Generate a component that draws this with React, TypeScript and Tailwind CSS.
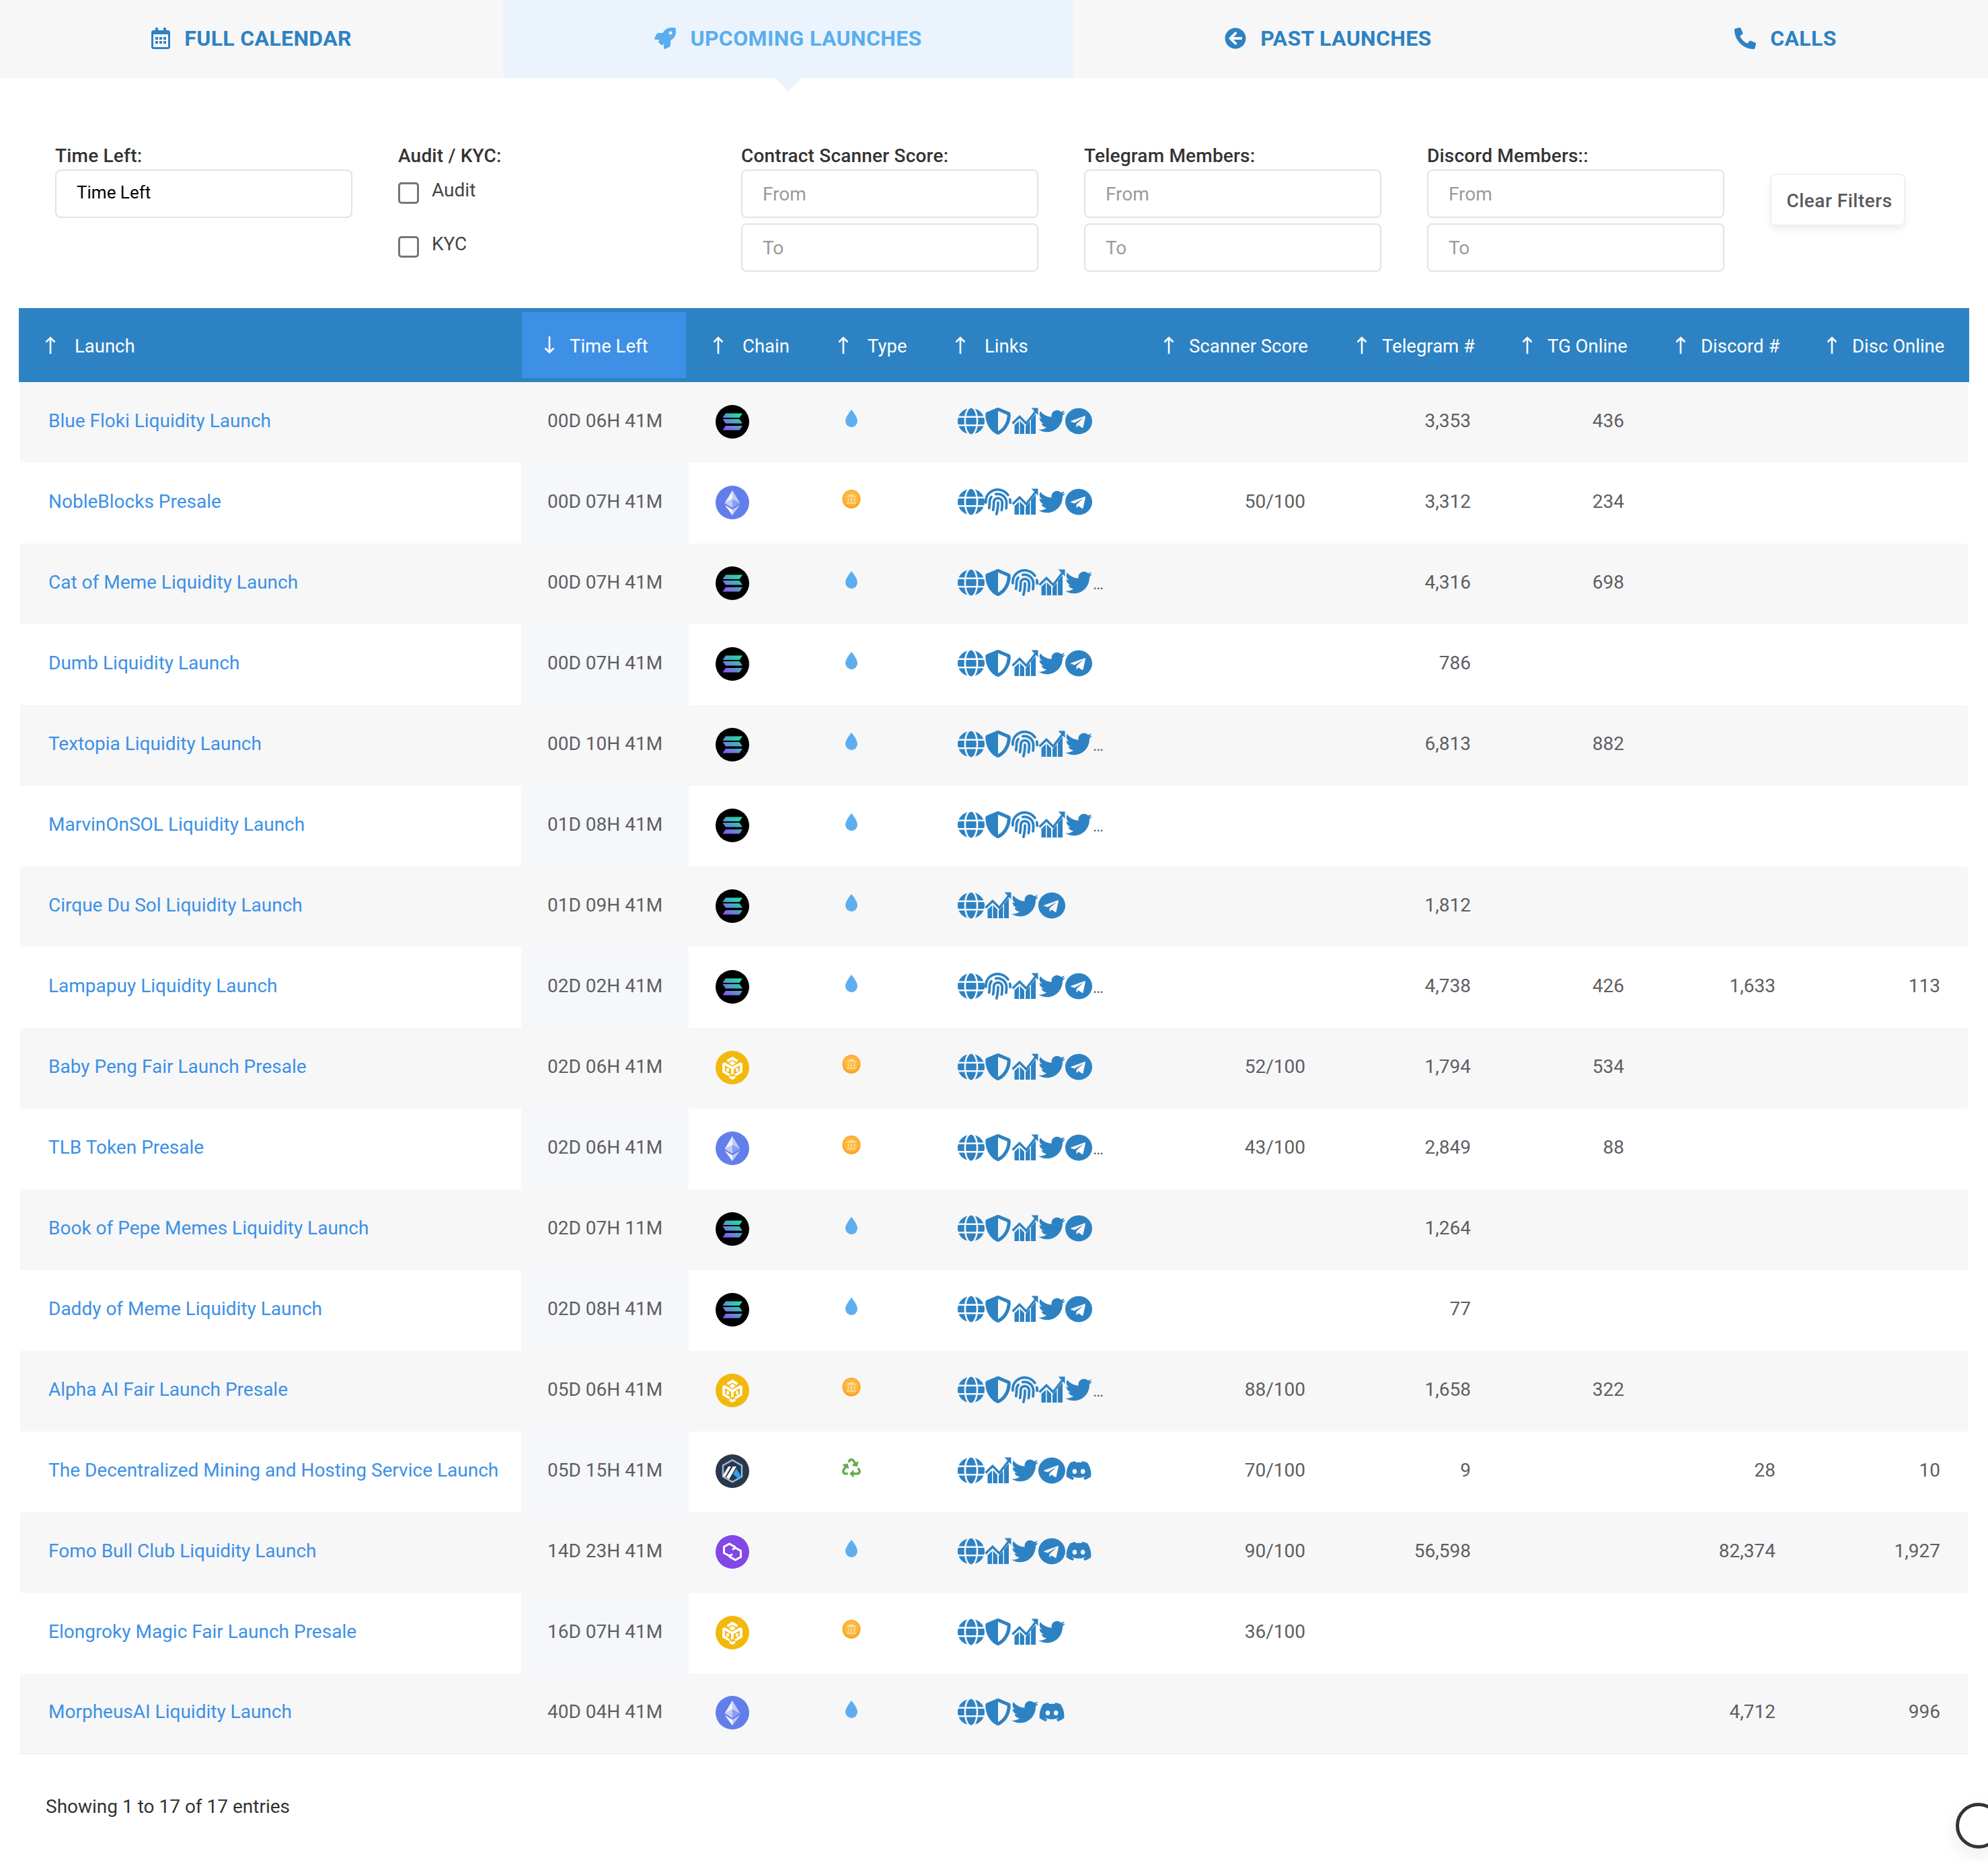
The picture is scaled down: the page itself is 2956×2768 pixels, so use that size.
import React from 'react'
import {
  FaArrowCircleLeft,
  FaDiscord,
  FaFingerprint,
  FaGlobe,
  FaPhoneAlt,
  FaRecycle,
  FaRegCalendarAlt,
  FaRocket,
  FaShieldAlt,
  FaTelegram,
  FaTwitter,
} from 'react-icons/fa'

type Chain = 'sol' | 'eth' | 'bnb' | 'arb' | 'poly'
type LaunchType = 'drop' | 'coin' | 'recycle'
type LinkKey = 'globe' | 'shield' | 'finger' | 'chart' | 'twitter' | 'telegram' | 'discord'

type Row = {
  name: string
  time: string
  chain: Chain
  type: LaunchType
  links: LinkKey[]
  more?: boolean
  score?: string
  tg?: string
  tgOnline?: string
  discord?: string
  discOnline?: string
}

const rows: Row[] = [
  { name: 'Blue Floki Liquidity Launch', time: '00D 06H 41M', chain: 'sol', type: 'drop', links: ['globe', 'shield', 'chart', 'twitter', 'telegram'], tg: '3,353', tgOnline: '436' },
  { name: 'NobleBlocks Presale', time: '00D 07H 41M', chain: 'eth', type: 'coin', links: ['globe', 'finger', 'chart', 'twitter', 'telegram'], score: '50/100', tg: '3,312', tgOnline: '234' },
  { name: 'Cat of Meme Liquidity Launch', time: '00D 07H 41M', chain: 'sol', type: 'drop', links: ['globe', 'shield', 'finger', 'chart', 'twitter'], more: true, tg: '4,316', tgOnline: '698' },
  { name: 'Dumb Liquidity Launch', time: '00D 07H 41M', chain: 'sol', type: 'drop', links: ['globe', 'shield', 'chart', 'twitter', 'telegram'], tg: '786' },
  { name: 'Textopia Liquidity Launch', time: '00D 10H 41M', chain: 'sol', type: 'drop', links: ['globe', 'shield', 'finger', 'chart', 'twitter'], more: true, tg: '6,813', tgOnline: '882' },
  { name: 'MarvinOnSOL Liquidity Launch', time: '01D 08H 41M', chain: 'sol', type: 'drop', links: ['globe', 'shield', 'finger', 'chart', 'twitter'], more: true },
  { name: 'Cirque Du Sol Liquidity Launch', time: '01D 09H 41M', chain: 'sol', type: 'drop', links: ['globe', 'chart', 'twitter', 'telegram'], tg: '1,812' },
  { name: 'Lampapuy Liquidity Launch', time: '02D 02H 41M', chain: 'sol', type: 'drop', links: ['globe', 'finger', 'chart', 'twitter', 'telegram'], more: true, tg: '4,738', tgOnline: '426', discord: '1,633', discOnline: '113' },
  { name: 'Baby Peng Fair Launch Presale', time: '02D 06H 41M', chain: 'bnb', type: 'coin', links: ['globe', 'shield', 'chart', 'twitter', 'telegram'], score: '52/100', tg: '1,794', tgOnline: '534' },
  { name: 'TLB Token Presale', time: '02D 06H 41M', chain: 'eth', type: 'coin', links: ['globe', 'shield', 'chart', 'twitter', 'telegram'], more: true, score: '43/100', tg: '2,849', tgOnline: '88' },
  { name: 'Book of Pepe Memes Liquidity Launch', time: '02D 07H 11M', chain: 'sol', type: 'drop', links: ['globe', 'shield', 'chart', 'twitter', 'telegram'], tg: '1,264' },
  { name: 'Daddy of Meme Liquidity Launch', time: '02D 08H 41M', chain: 'sol', type: 'drop', links: ['globe', 'shield', 'chart', 'twitter', 'telegram'], tg: '77' },
  { name: 'Alpha AI Fair Launch Presale', time: '05D 06H 41M', chain: 'bnb', type: 'coin', links: ['globe', 'shield', 'finger', 'chart', 'twitter'], more: true, score: '88/100', tg: '1,658', tgOnline: '322' },
  { name: 'The Decentralized Mining and Hosting Service Launch', time: '05D 15H 41M', chain: 'arb', type: 'recycle', links: ['globe', 'chart', 'twitter', 'telegram', 'discord'], score: '70/100', tg: '9', discord: '28', discOnline: '10' },
  { name: 'Fomo Bull Club Liquidity Launch', time: '14D 23H 41M', chain: 'poly', type: 'drop', links: ['globe', 'chart', 'twitter', 'telegram', 'discord'], score: '90/100', tg: '56,598', discord: '82,374', discOnline: '1,927' },
  { name: 'Elongroky Magic Fair Launch Presale', time: '16D 07H 41M', chain: 'bnb', type: 'coin', links: ['globe', 'shield', 'chart', 'twitter'], score: '36/100' },
  { name: 'MorpheusAI Liquidity Launch', time: '40D 04H 41M', chain: 'eth', type: 'drop', links: ['globe', 'shield', 'twitter', 'discord'], discord: '4,712', discOnline: '996' },
]

function ChartIcon() {
  return (
    <svg viewBox="0 0 40 40" className="h-10 w-10 shrink-0 text-[#2d82c3]" fill="currentColor">
      <path d="M4.500 26 11 20V39H4.500zM12.500 19.500 19 26v13h-6.500zM21 27.500l6.500-7.500V39H21zM29 17.500l7-8.500V39h-7z" />
      <path d="M1.500 23.500 12 13.500l10 10L37 4" fill="none" stroke="currentColor" strokeWidth="3.4" />
      <path d="M29.500 0.500H39.500V11z" />
    </svg>
  )
}

function LinkIcon({ kind }: { kind: LinkKey }) {
  const cls = 'h-10 w-10 shrink-0 text-[#2d82c3]'
  if (kind === 'globe') return <FaGlobe className={cls} preserveAspectRatio="none" />
  if (kind === 'shield') return <FaShieldAlt className={cls} />
  if (kind === 'finger') return <FaFingerprint className={cls} />
  if (kind === 'chart') return <ChartIcon />
  if (kind === 'twitter') return <FaTwitter className={cls} />
  if (kind === 'telegram') return <FaTelegram className={cls} preserveAspectRatio="none" />
  return <FaDiscord className={cls} />
}

function ChainIcon({ chain }: { chain: Chain }) {
  if (chain === 'sol') {
    return (
      <svg viewBox="0 0 50 50" className="h-[50px] w-[50px]">
        <defs>
          <linearGradient id="sol-grad" gradientUnits="userSpaceOnUse" x1="38" y1="9" x2="14" y2="41">
            <stop offset="0" stopColor="#14f195" />
            <stop offset="0.5" stopColor="#4fa0c8" />
            <stop offset="1" stopColor="#9945ff" />
          </linearGradient>
        </defs>
        <circle cx="25" cy="25" r="25" fill="#000" />
        <path fill="url(#sol-grad)" d="M15 12.500h25l-4.500 6.500h-25zM10.500 21h25l4.500 6.500H15zM15 31h25l-4.500 6.500h-25z" />
      </svg>
    )
  }
  if (chain === 'eth') {
    return (
      <svg viewBox="0 0 50 50" className="h-[50px] w-[50px]">
        <circle cx="25" cy="25" r="25" fill="#627eea" />
        <path fill="#fff" fillOpacity="0.9" d="M25 7v13l-11.500 6z" />
        <path fill="#fff" fillOpacity="0.6" d="M25 7v13l11.500 6z" />
        <path fill="#fff" fillOpacity="0.6" d="M25 20v13l-11.500-7z" />
        <path fill="#fff" fillOpacity="0.25" d="M25 20v13l11.500-7z" />
        <path fill="#fff" fillOpacity="0.95" d="M13.500 28.500 25 35.500V44z" />
        <path fill="#fff" fillOpacity="0.6" d="M36.500 28.500 25 35.500V44z" />
      </svg>
    )
  }
  if (chain === 'bnb') {
    return (
      <svg viewBox="0 0 50 50" className="h-[50px] w-[50px]">
        <circle cx="25" cy="25" r="25" fill="#f2b90c" />
        <g fill="none" stroke="#fff" strokeWidth="3.800">
          <path d="M17.500 15.500 25 11l7.500 4.500" />
          <path d="M12 18.500 25 26l13-7.500" />
          <path d="M25 26v9" />
          <path d="M12 18.500V31l9 5.500" />
          <path d="M38 18.500V31l-9 5.500" />
          <path d="M18 26v5M32 26v5" />
          <path d="M21 38.500 25 41l4-2.500" />
        </g>
        <path fill="#fff" d="M25 15l5 3.500-5 3.500-5-3.500z" />
      </svg>
    )
  }
  if (chain === 'arb') {
    return (
      <svg viewBox="0 0 50 50" className="h-[50px] w-[50px]">
        <circle cx="25" cy="25" r="25" fill="#2d374b" />
        <path fill="none" stroke="#96bedc" strokeWidth="2.400" d="M25 8.500 39 16.500V33L25 41 11 33V16.500z" />
        <path fill="#fff" d="M11 31 19 18h4l-9 16zM16 34l10-16h5L20 37z" />
        <path fill="#28a0f0" d="M31 21l7 12-5 3-7-7z" />
      </svg>
    )
  }
  return (
    <svg viewBox="0 0 50 50" className="h-[50px] w-[50px]">
      <circle cx="25" cy="25" r="25" fill="#8247e5" />
      <g fill="none" stroke="#fff" strokeWidth="3">
        <path d="M28.500 21v-3.500L20.500 13l-8 4.500v9l8 4.500 4.500-2.500" />
        <path d="M21.500 29v3.500l8 4.500 8-4.500v-9l-8-4.500-4.500 2.500" />
      </g>
    </svg>
  )
}

function TypeIcon({ type }: { type: LaunchType }) {
  if (type === 'drop') {
    return (
      <svg viewBox="0 0 18 26" className="h-[26px] w-[18px]" fill="#5eaeef">
        <path d="M9 0C9 0 0 10.500 0 17a9 9 0 0 0 18 0C18 10.500 9 0 9 0z" />
      </svg>
    )
  }
  if (type === 'coin') {
    return (
      <svg viewBox="0 0 28 28" className="h-7 w-7">
        <ellipse cx="14" cy="14" rx="13.500" ry="14" fill="#fba626" />
        <ellipse cx="14" cy="12.800" rx="11.500" ry="11.500" fill="#fdb63e" />
        <path fill="#ffdc96" d="M14 6l7 3.500v1.200H7V9.500zM8.500 12h2v6h-2zM13 12h2v6h-2zM17.500 12h2v6h-2zM7 19h14v1.800H7z" />
      </svg>
    )
  }
  return <FaRecycle className="h-7 w-7 text-[#66ab4a]" />
}

function SortArrow({ down }: { down?: boolean }) {
  return (
    <svg viewBox="0 0 16 26" className={down ? 'h-[26px] w-4 shrink-0 rotate-180' : 'h-[26px] w-4 shrink-0'} fill="none" stroke="#fff" strokeWidth="2.600">
      <path d="M8 26V2M1.500 8.500 8 2l6.500 6.500" />
    </svg>
  )
}

function Tab({ icon, label, active }: { icon: React.ReactNode; label: string; active?: boolean }) {
  return (
    <div className={active ? 'relative flex flex-auto items-center justify-center gap-[21px] bg-[#ebf4fd] pb-[3px] text-[#5aaeef]' : 'flex flex-auto items-center justify-center gap-[21px] bg-[#f7f7f7] pb-[3px] text-[#2d82c3]'}>
      {icon}
      <span className="text-[32px] font-bold tracking-[0.35px]">{label}</span>
      {active && <div className="absolute left-1/2 top-full h-0 w-0 -translate-x-1/2 border-x-[20px] border-t-[20px] border-x-transparent border-t-[#ebf4fd]" />}
    </div>
  )
}

function RangeFilter({ label }: { label: string }) {
  return (
    <div className="w-[442px] shrink-0">
      <div className="mb-[6px] pt-[2px] text-[28px] font-medium leading-[28px] tracking-[0.2px] text-[#333]">{label}</div>
      <input placeholder="From" className="mb-2 block h-[72px] w-full rounded-lg border-2 border-[#dfe3e8] bg-white px-[30px] text-[28px] placeholder:text-[#9b9b9b]" />
      <input placeholder="To" className="block h-[72px] w-full rounded-lg border-2 border-[#dfe3e8] bg-white px-[30px] text-[28px] placeholder:text-[#9b9b9b]" />
    </div>
  )
}

function Check({ label }: { label: string }) {
  return (
    <div className="flex h-[80px] items-start gap-[19px] pt-[9px]">
      <span className="mt-[16px] h-8 w-[31px] rounded-[5px] border-[3px] border-[#767676] bg-white" />
      <span className="mt-[10px] text-[28px] leading-[36px] text-[#444]">{label}</span>
    </div>
  )
}

function Th({ label, active, tight, first }: { label: string; active?: boolean; tight?: boolean; first?: boolean }) {
  return (
    <th className={active ? 'h-[110px] border-y-[6px] border-l border-r-4 border-[#2d82c3] bg-[#3d90e6] pl-[33px] text-left font-normal' : first ? 'h-[110px] bg-[#2d82c3] pl-[39px] text-left font-normal' : 'h-[110px] bg-[#2d82c3] pl-[36px] text-left font-normal'}>
      <div className={tight ? 'flex items-center gap-[22px] whitespace-nowrap text-[27.5px] text-white' : 'flex items-center gap-[28px] whitespace-nowrap text-[27.5px] text-white'}>
        <SortArrow down={active} />
        <span className="pt-1">{label}</span>
      </div>
    </th>
  )
}

export default function App() {
  return (
    <div className="relative h-[2768px] w-[2956px] overflow-hidden bg-white font-[Roboto,sans-serif]">
      <div className="flex h-[116px]">
        <Tab icon={<FaRegCalendarAlt className="h-8 w-7" />} label="FULL CALENDAR" />
        <Tab active icon={<FaRocket className="h-8 w-8" />} label="UPCOMING LAUNCHES" />
        <Tab icon={<FaArrowCircleLeft className="h-8 w-8" />} label="PAST LAUNCHES" />
        <Tab icon={<FaPhoneAlt className="h-8 w-8" />} label="CALLS" />
      </div>

      <div className="flex h-[342px] gap-[68px] pl-[82px] pt-[100px]">
        <div className="w-[442px] shrink-0">
          <div className="mb-[6px] pt-[2px] text-[28px] font-medium leading-[28px] tracking-[0.2px] text-[#333]">Time Left:</div>
          <input readOnly value="Time Left" className="block h-[72px] w-full rounded-lg border-2 border-[#dfe3e8] bg-white px-[30px] pb-1 text-[26px] text-black" />
        </div>
        <div className="w-[442px] shrink-0">
          <div className="pt-[2px] text-[28px] font-medium leading-[28px] tracking-[0.2px] text-[#333]">Audit / KYC:</div>
          <Check label="Audit" />
          <Check label="KYC" />
        </div>
        <RangeFilter label="Contract Scanner Score:" />
        <RangeFilter label="Telegram Members:" />
        <RangeFilter label="Discord Members::" />
        <button className="mt-[42px] h-[78px] w-[201px] shrink-0 rounded-lg border-2 border-[#eef0f4] bg-white pl-[5px] pt-[3px] text-[28px] font-medium tracking-[0.5px] text-[#5a5a5e] shadow-[0_6px_10px_rgba(0,0,0,0.06)]">Clear Filters</button>
      </div>

      <table className="ml-7 w-[2900px] table-fixed border-separate border-spacing-0">
        <colgroup>
          <col className="w-[747px]" />
          <col className="w-[249px]" />
          <col className="w-[186px]" />
          <col className="w-[174px]" />
          <col className="w-[310px]" />
          <col className="w-[287px]" />
          <col className="w-[246px]" />
          <col className="w-[228px]" />
          <col className="w-[225px]" />
          <col className="w-[248px]" />
        </colgroup>
        <thead>
          <tr>
            <Th label="Launch" first />
            <Th label="Time Left" active tight />
            <Th label="Chain" />
            <Th label="Type" />
            <Th label="Links" />
            <Th label="Scanner Score" tight />
            <Th label="Telegram #" tight />
            <Th label="TG Online" tight />
            <Th label="Discord #" tight />
            <Th label="Disc Online" tight />
          </tr>
        </thead>
        <tbody>
          {rows.map((row, i) => {
            const odd = i % 2 === 0
            const isLast = i === rows.length - 1
            const bg = odd ? 'bg-[#f7f7f8]' : 'bg-white'
            const edge = isLast ? 'border-b-2 border-b-[#eef0f6]' : ''
            const num = `h-[120px] whitespace-nowrap pb-[5px] text-right text-[28px] leading-[36px] text-[#5e5e62] ${bg} ${edge}`
            return (
              <tr key={row.name}>
                <td className={`h-[120px] whitespace-nowrap border-l-2 border-l-white pb-[5px] pl-[42px] text-[28px] leading-[36px] text-[#3d90e6] ${bg} ${edge}`}>{row.name}</td>
                <td className={`h-[120px] whitespace-nowrap pb-[5px] pl-[39px] text-[28px] leading-[36px] text-[#5e5e62] ${odd ? 'bg-[#f7f7f8]' : 'bg-[#f5f7fb]'} ${edge}`}>{row.time}</td>
                <td className={`h-[120px] pb-[2px] pl-10 ${bg} ${edge}`}>
                  <div className="h-[50px] w-[50px]"><ChainIcon chain={row.chain} /></div>
                </td>
                <td className={`h-[120px] pb-3 pl-[42px] ${bg} ${edge}`}>
                  <div className="flex h-7 w-7 items-center justify-center"><TypeIcon type={row.type} /></div>
                </td>
                <td className={`h-[120px] pb-1 pl-10 ${bg} ${edge}`}>
                  <div className="flex items-end">
                    {row.links.map((l) => <LinkIcon key={l} kind={l} />)}
                    {row.more && <span className="mb-[6px] ml-[1px] text-[24px] leading-[24px] text-[#5e5e62]">…</span>}
                  </div>
                </td>
                <td className={`${num} pr-10`}>{row.score}</td>
                <td className={`${num} pr-10`}>{row.tg}</td>
                <td className={`${num} pr-10`}>{row.tgOnline}</td>
                <td className={`${num} pr-10`}>{row.discord}</td>
                <td className={`${num} border-r-2 border-r-white pr-[41px]`}>{row.discOnline}</td>
              </tr>
            )
          })}
        </tbody>
      </table>

      <div className="ml-[68px] mt-[60px] text-[28px] leading-[36px] text-[#333]">Showing 1 to 17 of 17 entries</div>

      <div className="absolute bottom-5 right-[-20px] h-[68px] w-[68px] rounded-full border-[5px] border-[#33343a] bg-white shadow-[0_10px_30px_rgba(0,0,0,0.08)]" />
    </div>
  )
}
